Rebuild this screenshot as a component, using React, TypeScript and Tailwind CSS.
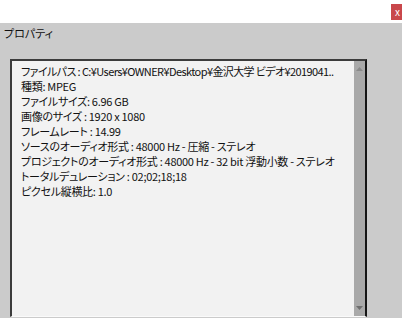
import { ReactNode } from "react";

const lines: string[] = [
    "ファイルパス : C:¥Users¥OWNER¥Desktop¥金沢大学  ビデオ¥2019041..",
    "種類: MPEG",
    "ファイルサイズ: 6.96 GB",
    "画像のサイズ : 1920 x 1080",
    "フレームレート : 14.99",
    "ソースのオーディオ形式 : 48000 Hz - 圧縮 - ステレオ",
    "プロジェクトのオーディオ形式 : 48000 Hz - 32 bit 浮動小数 - ステレオ",
    "トータルデュレーション : 02;02;18;18",
    "ピクセル縦横比: 1.0",
];

const Arrow = ({ down }: { down?: boolean }): ReactNode => (
    <svg width="7" height="4" viewBox="0 0 7 4" className="block">
        {down ? <path d="M0 0 H7 L3.5 4 Z" fill="#6e6e6e" /> : <path d="M0 4 H7 L3.5 0 Z" fill="#8a8a8a" />}
    </svg>
);

export default function App() {
    return (
        <div className="w-[402px] h-[318px] bg-[#cbcbcb] flex flex-col overflow-hidden font-['Noto_Sans_CJK_JP','Noto_Sans',sans-serif] text-[#111]">
            {/* title strip */}
            <div className="h-[23px] shrink-0 bg-white flex justify-end items-start pt-[4px]">
                <div className="w-[11px] h-[16px] bg-[#c9474b] text-white text-[10px] leading-[15px] pl-[4px] overflow-hidden">x</div>
            </div>

            <div className="h-[20px] shrink-0 pl-[4px] text-[11px] leading-[20px] [font-feature-settings:'palt']">プロパティ</div>

            {/* properties box */}
            <div className="mt-[16px] mb-[1px] ml-[10px] w-[357px] flex-1 flex border-l-2 border-t-2 border-r-2 border-l-[#3c3c3c] border-t-[#3c3c3c] border-r-[#151515] border-b border-b-[#fafafa] bg-[#f2f2f2]">
                <div className="flex-1 min-w-0 pl-[9px] pt-[3px] text-[11px] leading-[15px] [font-feature-settings:'palt'] tracking-[-0.3px]">
                    {lines.map((l, i) => (
                        <div key={l} className={i === 0 ? "whitespace-nowrap tracking-[-0.6px]" : "whitespace-nowrap"}>{l}</div>
                    ))}
                </div>
                <div className="w-[11px] shrink-0 bg-[#a9a9a9] flex flex-col items-center justify-between pt-[6px] pb-[6px]">
                    <Arrow />
                    <Arrow down />
                </div>
            </div>
        </div>
    );
}
